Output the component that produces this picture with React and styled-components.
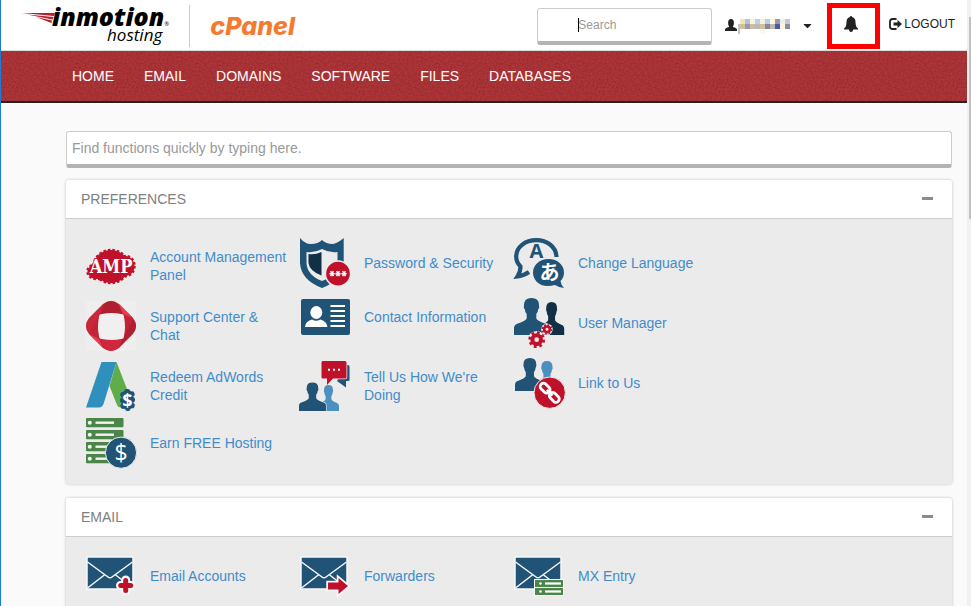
import React, { useState } from "react";
import styled, { createGlobalStyle } from "styled-components";
import { FaCaretDown } from "react-icons/fa";

const NAVY = "#205375";
const DARK = "#112f45";
const SKY = "#4c90c0";
const RED = "#c0112b";
const GREEN = "#4b8549";
const PAPER = "#ebebeb";

const noise =
	"url(\"data:image/svg+xml,%3Csvg xmlns='http://www.w3.org/2000/svg' width='120' height='120'%3E%3Cfilter id='n' color-interpolation-filters='sRGB'%3E%3CfeTurbulence type='fractalNoise' baseFrequency='.5' numOctaves='2' stitchTiles='stitch'/%3E%3CfeColorMatrix values='0 0 0 0 .5 0 0 0 0 .1 0 0 0 0 .12 .8 0 0 0 -.2'/%3E%3C/filter%3E%3Crect width='120' height='120' filter='url(%23n)'/%3E%3C/svg%3E\")";

const BUST =
	"M0 37V30Q0 26.500 4 25.500Q11.500 23 12.700 20.500V16Q11 14 10.700 11Q9.300 10 10 7Q10 0 17.500 0Q25 0 25 7Q25.700 10 24.300 11Q24 14 22.300 16V20.500Q23.500 23 31 25.500Q35 26.500 35 30V37Z";

function Gear({ cx, cy, r }) {
	const mid = r * 0.8;
	const step = (2 * Math.PI * mid) / 16;
	return (
		<g fill="none" stroke={RED}>
			<circle cx={cx} cy={cy} r={r + 0.4} fill={PAPER} stroke="none" />
			<circle cx={cx} cy={cy} r={r * 0.52} strokeWidth={r * 0.48} />
			<circle
				cx={cx}
				cy={cy}
				r={mid}
				strokeWidth={r * 0.4}
				strokeDasharray={`${step} ${step}`}
			/>
		</g>
	);
}

function Envelope() {
	return (
		<g>
			<rect x="1" y="1" width="46" height="32" fill={NAVY} stroke="#f8f8f8" strokeWidth="1.5" />
			<path
				d="M1.5 6L22 21Q24 22.5 26 21L46.5 6M1.5 32L19 18.5M46.5 32L29 18.5"
				fill="none"
				stroke="#f8f8f8"
				strokeWidth="1.5"
			/>
		</g>
	);
}

const icons = {
	amp: {
		h: 37,
		art: (
			<>
				<g fill={RED} stroke={RED} strokeWidth="2.500" strokeDasharray="2.500 2">
					<ellipse cx="10.500" cy="23.500" rx="9" ry="7.500" />
					<ellipse cx="40" cy="18" rx="8.500" ry="10" />
					<ellipse cx="25" cy="18.500" rx="17.500" ry="16.500" />
				</g>
				<text
					x="25"
					y="25"
					textAnchor="middle"
					fontFamily="DejaVu Serif Condensed, DejaVu Serif, serif"
					fontWeight="700"
					fontSize="18"
					fill="#fff"
					stroke={RED}
					strokeWidth="1.500"
					paintOrder="stroke"
				>
					AMP
				</text>
			</>
		),
	},
	support: {
		h: 50,
		art: (
			<>
				<rect width="50" height="50" fill="#eee" />
				<path
					d="M17 3Q25-3 33 3L47 17Q53 25 47 33L33 47Q25 53 17 47L3 33Q-3 25 3 17Z"
					fill="#c52337"
				/>
				<path d="M15 13L18 3Q25-3 32 3L36 13Q25 11 15 13Z" fill="#b01f2f" />
				<path d="M15 38L18 47Q25 53 32 47L36 38Q25 40 15 38Z" fill="#cf283c" />
				<path d="M13 14L3 32Q-3 25 3 18L16 5Z" fill="#c9273a" />
				<path d="M37 37L47 18Q53 25 47 32L34 45Z" fill="#b01f2f" />
				<path d="M33 3L37 13L47 17Z" fill="#e83c51" />
				<path d="M3 33L13 38L17 47Z" fill="#e83c51" />
				<path
					d="M16 13Q26 11 35 13Q38 13 38 16Q40 26 38 35Q38 38 35 38Q26 40 16 38Q13 38 13 35Q11 26 13 16Q13 13 16 13Z"
					fill="#f0f0f0"
				/>
			</>
		),
	},
	adwords: {
		h: 50,
		art: (
			<>
				<path d="M30.5 1L23.5 25L31 44Q32 46.5 35 46.5H46L46 41Z" fill="#5fac4b" />
				<path d="M15.5 1H30.5L17.5 43Q16 46.5 13 46.5H0Z" fill="#2f8fbd" />
				<rect x="35.500" y="29.500" width="12" height="19" rx="5" fill={NAVY} />
				<rect
					x="36"
					y="30"
					width="11"
					height="18"
					rx="5"
					fill="none"
					stroke={NAVY}
					strokeWidth="4"
					strokeLinecap="round"
					strokeDasharray="1 5"
				/>
				<text
					x="41.500"
					y="45.500"
					textAnchor="middle"
					fontFamily="Open Sans, sans-serif"
					fontWeight="700"
					fontSize="18"
					fill="#fff"
				>
					$
				</text>
			</>
		),
	},
	hosting: {
		h: 50,
		art: (
			<>
				{[0, 12, 24, 36].map((y) => (
					<g key={y}>
						<rect y={y} width="37.5" height="9.3" rx="1" fill={GREEN} />
						<circle cx="3.8" cy={y + 4.7} r="2" fill="#f4f4f4" />
						<path d={`M9.5 ${y + 4.7}H28`} stroke="#f4f4f4" strokeWidth="2.4" />
					</g>
				))}
				<circle cx="35" cy="34.7" r="15.6" fill={NAVY} stroke={PAPER} strokeWidth="1" />
				<text
					x="35"
					y="43"
					textAnchor="middle"
					fontFamily="Open Sans, sans-serif"
					fontWeight="500"
					fontSize="23"
					fill="#fff"
				>
					$
				</text>
			</>
		),
	},
	shield: {
		h: 50,
		art: (
			<>
				<path
					d="M0 0Q5 6 11 6Q18 6 22 2Q26 6 33 6Q38 5 43.7 0V25Q43 42 22 50Q1 42 0 25Z"
					fill={NAVY}
				/>
				<path
					d="M6.5 14Q15 15 22 11Q29 15 37.5 14V25Q37 37 22 43Q7 37 6.5 25Z"
					fill={PAPER}
				/>
				<path d="M8.5 16Q15 17 21.5 14V37.5Q9.5 33 8.5 25Z" fill={DARK} />
				<circle cx="38" cy="35.7" r="12.6" fill={RED} stroke={PAPER} strokeWidth="1.5" />
				{[32, 38, 44].map((x) => (
					<path
						key={x}
						d={`M${x - 2.6} 35.7h5.2M${x - 1.4} 33.2l2.8 5M${x + 1.4} 33.2l-2.8 5`}
						stroke="#fff"
						strokeWidth="1.5"
					/>
				))}
			</>
		),
	},
	contact: {
		h: 36,
		art: (
			<>
				<rect x="1" width="49" height="36" rx="2" fill={NAVY} />
				<ellipse cx="16.3" cy="13.5" rx="6" ry="6.5" fill="#fff" />
				<path d="M5 28Q5 22.500 12 20.500Q16 23 20.500 20.500Q27 22.500 27.500 28Z" fill="#fff" />
				<path
					d="M30.500 7H45M30.500 12H45M30.500 17H45M30.500 22H45M30.500 27H45"
					stroke="#fff"
					strokeWidth="2"
				/>
			</>
		),
	},
	feedback: {
		h: 50,
		art: (
			<>
				<path d="M46 4H48Q49.500 4 49.500 6V19Q49.500 20 48 20H46V26.500L37 20Z" fill={NAVY} />
				<path
					d="M22.500 0H45Q46.500 0 46.500 1.500V16Q46.500 17.500 45 17.500H33L27 24V17.500H22.500Q21.500 17.500 21.500 16V1.500Q21.500 0 22.500 0Z"
					fill={RED}
					stroke={PAPER}
					strokeWidth="1.500"
					paintOrder="stroke"
				/>
				<path d="M28 8.800h2M33 8.800h2M38 8.800h2" stroke="#fff" strokeWidth="2" />
				<path d={BUST} transform="translate(18 24) scale(.6 .7)" fill={SKY} />
				<path
					d={BUST}
					transform="translate(-1 21.500) scale(.77)"
					fill={NAVY}
					stroke={PAPER}
					strokeWidth="1.500"
					paintOrder="stroke"
				/>
			</>
		),
	},
	language: {
		h: 50,
		art: (
			<>
				<path
					d="M42.500 19C42 8 32.500 2.200 22.500 2.200C11 2.200 2.200 9 2.200 18.500C2.200 23 4 26 6.500 28.500Q6.500 34 3.500 38.500Q9 38 15 34"
					fill="none"
					stroke={NAVY}
					strokeWidth="4.200"
				/>
				<text
					x="22.500"
					y="20"
					textAnchor="middle"
					fontFamily="Open Sans, sans-serif"
					fontWeight="700"
					fontSize="20"
					fill={NAVY}
				>
					A
				</text>
				<path
					d="M34.500 21C43.500 21 50 27 50 34.500Q50 40 46.500 43Q47 47 50 50Q45 49.500 41 47C27 51 19 43 19 34.500C19 27 25.500 21 34.500 21Z"
					fill={NAVY}
				/>
				<text
					x="35.500"
					y="41.500"
					textAnchor="middle"
					fontFamily="Noto Sans CJK JP, sans-serif"
					fontWeight="700"
					fontSize="20"
					fill="#fff"
				>
					あ
				</text>
			</>
		),
	},
	users: {
		h: 50,
		art: (
			<>
				<path d={BUST} transform="translate(25 4) scale(.72 .89)" fill={DARK} />
				<path
					d={BUST}
					fill={NAVY}
					stroke={PAPER}
					strokeWidth="1.500"
					paintOrder="stroke"
				/>
				<Gear cx={22.7} cy={41.7} r={8.4} />
				<Gear cx={33} cy={31.3} r={5.4} />
			</>
		),
	},
	link: {
		h: 50,
		art: (
			<>
				<path d={BUST} transform="translate(20 3) scale(.74 .8)" fill={SKY} />
				<path
					d={BUST}
					transform="translate(1) scale(.85 .89)"
					fill={NAVY}
					stroke={PAPER}
					strokeWidth="1.500"
					paintOrder="stroke"
				/>
				<circle cx="35.700" cy="34.700" r="15.700" fill={RED} stroke={PAPER} strokeWidth="1" />
				<g
					transform="translate(35.700 34.700) rotate(45)"
					fill="none"
					stroke="#fff"
					strokeWidth="2.800"
				>
					<rect x="-12" y="-3.300" width="11" height="6.600" rx="3" />
					<rect x="1" y="-3.300" width="11" height="6.600" rx="3" />
					<path d="M-4 0H4" />
				</g>
			</>
		),
	},
	mailAdd: {
		h: 40,
		art: (
			<>
				<Envelope />
				<g strokeLinecap="round">
					<path d="M39.700 24V35M34.500 29.500H45" stroke="#f8f8f8" strokeWidth="9" />
					<path d="M39.700 24.500V34.500M34.700 29.500H44.700" stroke={RED} strokeWidth="5" />
				</g>
			</>
		),
	},
	mailForward: {
		h: 40,
		art: (
			<>
				<Envelope />
				<path
					d="M28 26.500H38.500V22L48 30L38.500 38V33.500H28Z"
					fill={RED}
					stroke="#f8f8f8"
					strokeWidth="3.500"
					paintOrder="stroke"
				/>
			</>
		),
	},
	mx: {
		h: 40,
		art: (
			<>
				<Envelope />
				<rect x="20" y="23" width="30" height="17" fill="#f8f8f8" />
				{[24, 32].map((y) => (
					<g key={y}>
						<rect x="21" y={y} width="28" height="7" fill={GREEN} />
						<circle cx="26.500" cy={y + 3.5} r="1.300" fill="#fff" />
						<path d={`M31 ${y + 3.5}H47`} stroke="#fff" strokeWidth="2.200" />
					</g>
				))}
			</>
		),
	},
};

const navItems = ["HOME", "EMAIL", "DOMAINS", "SOFTWARE", "FILES", "DATABASES"];

const sections = [
	{
		title: "PREFERENCES",
		items: [
			["amp", "Account Management Panel"],
			["shield", "Password & Security"],
			["language", "Change Language"],
			["support", "Support Center & Chat"],
			["contact", "Contact Information"],
			["users", "User Manager"],
			["adwords", "Redeem AdWords Credit"],
			["feedback", "Tell Us How We're Doing"],
			["link", "Link to Us"],
			["hosting", "Earn FREE Hosting"],
		],
	},
	{
		title: "EMAIL",
		items: [
			["mailAdd", "Email Accounts"],
			["mailForward", "Forwarders"],
			["mx", "MX Entry"],
		],
	},
];

// blocks that stand in for the account name
const blocks = [
	["#f7e0c0", "#a9c4e4", "#fff1dc", "#b3d2ee", "#fbefdc", "#b3cfec", "#fff6e4", "#a394a6", "#e6f3ec", "#cdc3d0"],
	["#c9c49f", "#a394a6", "#c9bfa8", "#bdb6bd", "#c9c49f", "#8f84a0", "#bfb8ae", "#4a5aa6", "#fff4e0", "#8c8aa8"],
];

function Panel({ title, items }) {
	const [open, setOpen] = useState(true);
	return (
		<Card>
			<CardHead>
				<CardTitle>{title}</CardTitle>
				<Toggle aria-label={`Toggle ${title}`} onClick={() => setOpen(!open)}>
					<Minus />
				</Toggle>
			</CardHead>
			{open ? (
				<Items>
					{items.map(([icon, label]) => (
						<Item key={label} href="#">
							<svg width="50" height={icons[icon].h} overflow="visible" aria-hidden="true">
								{icons[icon].art}
							</svg>
							<Label>{label}</Label>
						</Item>
					))}
				</Items>
			) : null}
		</Card>
	);
}

export default function App() {
	return (
		<Screen>
			<Global />
			<Page>
				<Header>
					<Brand href="#">
						<svg width="34" height="14" viewBox="0 0 34 14" aria-hidden="true">
							<path d="M1 2L34 2L33 5Z" fill="#b5202b" />
							<path d="M6 3.500L32.500 6L31.500 8.500Z" fill="#b5202b" />
							<path d="M15 6L31 9.500L30.500 12Z" fill="#b5202b" />
						</svg>
						<BrandText>
							<BrandName>
								inmotion<Mark>®</Mark>
							</BrandName>
							<BrandSub>hosting</BrandSub>
						</BrandText>
					</Brand>
					<CPanel>cPanel</CPanel>
					<SearchBox>
						<TopSearch aria-label="Search" placeholder="Search" />
						<TextCursor />
					</SearchBox>
					<UserButton aria-label="Account">
						<svg width="12" height="12" fill="currentColor" aria-hidden="true">
							<ellipse cx="6" cy="4" rx="2.900" ry="4" />
							<path d="M4 6H8V8Q12 9.200 12 10.500V12H0V10.500Q0 9.200 4 8Z" />
						</svg>
						<svg width="53" height="15" aria-hidden="true">
							<path d="M1 5H3V15H1Z" fill="#c4c4c8" />
							{blocks.map((row, y) =>
								row.map((fill, x) => (
									<rect key={`${x}-${y}`} x={x * 5 + 3} y={y * 5} width="5" height="5" fill={fill} />
								))
							)}
							<rect x="23" y="10" width="5" height="5" fill="#fff6e8" />
						</svg>
						<FaCaretDown size={13} />
					</UserButton>
					<BellButton aria-label="Notifications">
						<svg width="14" height="16" fill="currentColor" aria-hidden="true">
							<path d="M7 0Q8 0 8.200 1Q11.500 2 11.500 6Q11.500 11 14 12.500V13.500H0V12.500Q2.500 11 2.500 6Q2.500 2 5.800 1Q6 0 7 0Z" />
							<path d="M5 13H9.200Q9 16 7 16Q5 16 5 13Z" />
						</svg>
					</BellButton>
					<Logout href="#">
						<svg width="13" height="12" viewBox="0 0 13 12" aria-hidden="true">
							<path
								d="M7.500 1H3.500Q1 1 1 3.500V8.500Q1 11 3.500 11H7.500"
								fill="none"
								stroke="#222"
								strokeWidth="1.800"
							/>
							<path d="M4.500 4.500H8.500V2L13 6L8.500 10V7.500H4.500Z" fill="#222" />
						</svg>
						LOGOUT
					</Logout>
				</Header>
				<Nav>
					{navItems.map((item) => (
						<NavLink key={item} href="#">
							{item}
						</NavLink>
					))}
				</Nav>
				<Main>
					<Finder aria-label="Find functions" placeholder="Find functions quickly by typing here." />
					{sections.map((section) => (
						<Panel key={section.title} {...section} />
					))}
				</Main>
			</Page>
			<Track>
				<Thumb />
			</Track>
		</Screen>
	);
}

const Global = createGlobalStyle`
	* {
		box-sizing: border-box;
	}
	body {
		margin: 0;
		background-color: #fafafa;
		font-family: "Liberation Sans", Arial, sans-serif;
		font-size: 14px;
		line-height: 18px;
	}
	input, button {
		font-family: inherit;
	}
	a {
		text-decoration: none;
	}
`;

const Screen = styled.div`
	display: flex;
	height: 100vh;
	overflow: hidden;
	border-left: 1px solid #1c7cd6;
`;
const Page = styled.div`
	flex: 1;
	min-width: 0;
`;
const Track = styled.div`
	width: 4px;
	padding: 17px 0 0 2px;
	background-color: #f1f1f1;
`;
const Thumb = styled.div`
	height: 202px;
	background-color: #c1c1c1;
`;
const Header = styled.header`
	display: flex;
	align-items: center;
	height: 51px;
	padding: 2px 12px 0 20px;
	background-color: #fff;
	border-bottom: 1px solid #ddd;
`;
const Brand = styled.a`
	display: flex;
	align-items: flex-start;
	height: 42px;
	padding: 6px 20px 0 0;
	border-right: 1px solid #ccc;
	color: #000;
`;
const BrandText = styled.div`
	display: flex;
	flex-direction: column;
	align-items: flex-end;
	margin: -4px 0 0 -3px;
	font-family: "Open Sans", sans-serif;
	font-style: italic;
`;
const BrandName = styled.div`
	height: 19px;
	font-size: 25px;
	font-weight: 800;
	line-height: 18px;
`;
const Mark = styled.span`
	font-size: 6px;
	font-weight: 400;
`;
const BrandSub = styled.div`
	padding-right: 7px;
	font-size: 17px;
	line-height: 18px;
`;
const CPanel = styled.div`
	margin-left: 20px;
	color: #f47a30;
	font-family: Inter, sans-serif;
	font-size: 25px;
	font-weight: 800;
	font-style: italic;
	line-height: 30px;
`;
const SearchBox = styled.div`
	position: relative;
	margin-left: auto;
`;
const TopSearch = styled.input`
	display: block;
	width: 175px;
	height: 37px;
	padding: 0 12px 0 40px;
	border: 1px solid #ccc;
	border-bottom: 4px solid #b3b3b3;
	border-radius: 3px;
	background-color: #fff;
	font-size: 12px;
	outline: none;

	&::placeholder {
		color: #999;
		opacity: 1;
	}
`;
const TextCursor = styled.span`
	position: absolute;
	left: 41px;
	top: 10px;
	width: 1px;
	height: 14px;
	background-color: #000;
`;
const UserButton = styled.button`
	display: flex;
	align-items: center;
	margin-left: 13px;
	padding: 0;
	border: none;
	background-color: transparent;
	color: #222;
	cursor: pointer;

	svg:first-child {
		margin-bottom: 3px;
	}
	svg:last-child {
		margin: 0 0 2px 11px;
	}
`;
const BellButton = styled.button`
	display: flex;
	align-items: center;
	justify-content: center;
	width: 53px;
	height: 46px;
	margin: 0 9px 0 13px;
	padding: 0 5px 4px 0;
	border: 5px solid #f00;
	background-color: #fff;
	color: #222;
	cursor: pointer;
`;
const Logout = styled.a`
	display: flex;
	align-items: center;
	gap: 2px;
	padding-bottom: 5px;
	color: #222;
	font-size: 12px;
`;
const Nav = styled.nav`
	display: flex;
	align-items: center;
	height: 52px;
	padding-left: 56px;
	border-bottom: 2px solid #222;
	background-color: #b0383b;
	background-image: ${noise};
`;
const NavLink = styled.a`
	padding: 0 15px;
	color: #fff;
`;
const Main = styled.main`
	display: flex;
	flex-direction: column;
	gap: 14px;
	padding: 28px 15px 0 65px;
`;
const Finder = styled.input`
	width: 100%;
	height: 37px;
	margin-bottom: -2px;
	padding: 0 5px;
	border: 1px solid #ccc;
	border-bottom: 4px solid #b3b3b3;
	border-radius: 3px;
	background-color: #fff;
	font-size: 14px;
	outline: none;

	&::placeholder {
		color: #999;
		opacity: 1;
	}
`;
const Card = styled.section`
	border-radius: 3px;
	background-color: ${PAPER};
	box-shadow: 0 0 3px rgba(0, 0, 0, 0.25);
`;
const CardHead = styled.div`
	display: flex;
	align-items: center;
	justify-content: space-between;
	height: 39px;
	padding: 0 15px;
	border-bottom: 1px solid #ccc;
	border-radius: 3px 3px 0 0;
	background-color: #fff;
`;
const CardTitle = styled.h2`
	margin: 0;
	color: #808080;
	font-size: 14px;
	font-weight: 400;
`;
const Toggle = styled.button`
	padding: 4px 4px 6px;
	border: none;
	background-color: transparent;
	cursor: pointer;
`;
const Minus = styled.span`
	display: block;
	width: 11px;
	height: 3px;
	background-color: #8a8a8a;
`;
const Items = styled.div`
	display: grid;
	grid-template-columns: repeat(3, 25%);
	align-items: start;
	row-gap: 4px;
	padding: 19px 15px 16px;
`;
const Item = styled.a`
	display: flex;
	align-items: center;
	gap: 14px;
	padding: 0 5px;
	color: #428bca;

	svg {
		flex-shrink: 0;
	}
`;
const Label = styled.span`
	padding: 10px 0;
`;
